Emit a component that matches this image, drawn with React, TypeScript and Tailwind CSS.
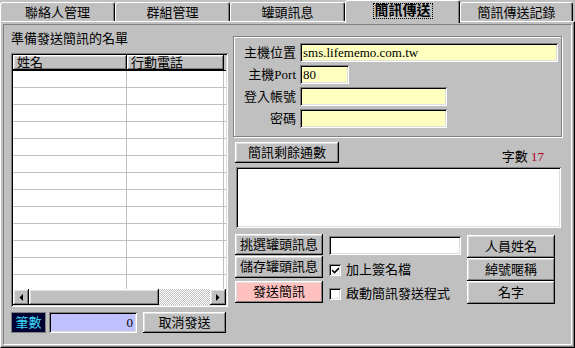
import React from 'react';

const FONT = "font-['Liberation_Serif','Noto_Sans_CJK_TC',serif]";
const RAISED =
  'shadow-[inset_-1px_-1px_0_#000,inset_1px_1px_0_#fff,inset_-2px_-2px_0_#808080,inset_2px_2px_0_#dfdfdf]';
const SUNKEN =
  'shadow-[inset_1px_1px_0_#808080,inset_-1px_-1px_0_#fff,inset_2px_2px_0_#000,inset_-2px_-2px_0_#dfdfdf]';

const tabs = ['聯絡人管理', '群組管理', '罐頭訊息', '簡訊傳送', '簡訊傳送記錄'];

const Btn: React.FC<{ className?: string; children: React.ReactNode }> = ({ className = '', children }) => (
  <button
    className={`flex items-center justify-center text-[13px] leading-[16px] text-black ${RAISED} ${className}`}
  >
    {children}
  </button>
);

const Field: React.FC<{ className?: string; children?: React.ReactNode }> = ({ className = '', children }) => (
  <div className={`flex h-[19px] items-center pl-[3px] text-[13px] leading-[15px] ${SUNKEN} ${className}`}>
    {children}
  </div>
);

const Arrow: React.FC<{ dir: 'left' | 'right' }> = ({ dir }) => (
  <svg width="4" height="7" viewBox="0 0 4 7">
    {dir === 'left' ? <path d="M4 0 L4 7 L0.5 3.5 Z" fill="#000" /> : <path d="M0 0 L0 7 L3.5 3.5 Z" fill="#000" />}
  </svg>
);

const Check: React.FC<{ checked?: boolean; label: string }> = ({ checked, label }) => (
  <div className="flex h-[16px] items-center">
    <div className={`flex h-[12px] w-[12px] items-center justify-center bg-white ${SUNKEN}`}>
      {checked && (
        <svg width="7" height="7" viewBox="0 0 7 7">
          <path d="M0 3 L2.5 5.5 L7 1" stroke="#000" strokeWidth="1.6" fill="none" />
        </svg>
      )}
    </div>
    <span className="ml-[5px] text-[13px] leading-[16px]">{label}</span>
  </div>
);

const rows = Array.from({ length: 13 });

export default function App() {
  return (
    <div className={`flex h-[348px] w-[575px] flex-col overflow-hidden bg-[#c0c0c0] text-black ${FONT}`}>
      {/* tab strip */}
      <div className="flex h-[21px] items-end">
        {tabs.map((t, i) =>
          i === 3 ? (
            <div
              key={t}
              className="relative z-10 -mb-[2px] flex h-[23px] w-[115px] justify-center rounded-t-[3px] border-x border-t border-white border-r-black bg-[#c0c0c0] pt-[2px] shadow-[inset_-1px_0_0_#808080]"
            >
              <span className="h-[16px] border border-dotted border-black px-[1px] text-[14px] font-bold leading-[14px]">
                {t}
              </span>
            </div>
          ) : (
            <div
              key={t}
              className={`flex h-[19px] items-center justify-center rounded-t-[3px] border-x border-t border-white border-r-black text-[13px] leading-[15px] shadow-[inset_-1px_0_0_#808080] ${
                i === 4 ? 'w-[113px]' : 'w-[115px]'
              }`}
            >
              {t}
            </div>
          )
        )}
      </div>

      {/* tab page */}
      <div className="flex-1 border border-white border-r-black border-b-black p-[2px] shadow-[inset_-1px_-1px_0_#808080]">
        <div className="flex h-full border border-[#808080] border-r-white border-b-white pl-[7px]">
          {/* left: recipient list */}
          <div className="flex w-[217px] flex-col pt-[6px]">
            <div className="h-[22px] text-[13px] leading-[16px]">準備發送簡訊的名單</div>
            <div className={`flex h-[254px] flex-col bg-white p-[2px] ${SUNKEN}`}>
              <div className="flex h-[16px] shrink-0 border-b border-black bg-[#c0c0c0] text-[13px] leading-[15px]">
                <div className={`w-[114px] pl-[4px] ${RAISED}`}>姓名</div>
                <div className={`w-[97px] pl-[4px] ${RAISED}`}>行動電話</div>
                <div className="flex-1" />
              </div>
              <div className="flex-1 overflow-hidden">
                {rows.map((_, i) => (
                  <div key={i} className="flex h-[17px] border-b border-[#c0c0c0]">
                    <div className="w-[114px] border-r border-[#c0c0c0]" />
                    <div className="w-[97px] border-r border-[#c0c0c0]" />
                  </div>
                ))}
              </div>
              <div className="flex h-[16px] shrink-0 bg-[#c0c0c0]">
                <div className={`flex w-[16px] items-center justify-center ${RAISED}`}>
                  <Arrow dir="left" />
                </div>
                <div className={`w-[130px] ${RAISED}`} />
                <div className="flex-1 bg-[image:repeating-conic-gradient(#c0c0c0_0%_25%,#fff_0%_50%)] bg-size-[2px_2px]" />
                <div className={`flex w-[16px] items-center justify-center ${RAISED}`}>
                  <Arrow dir="right" />
                </div>
              </div>
            </div>
            <div className="mt-[5px] flex h-[21px]">
              <div className="flex w-[35px] items-center justify-center bg-[#000033] text-[13px] leading-[16px] text-[#3cd8f8] shadow-[inset_1px_1px_0_#808080,inset_-1px_-1px_0_#808080]">
                筆數
              </div>
              <div
                className={`ml-[3px] flex w-[88px] items-center justify-end bg-[#c0c0ff] pr-[4px] text-[13px] leading-[16px] ${SUNKEN}`}
              >
                0
              </div>
              <Btn className="ml-[6px] w-[83px]">取消發送</Btn>
            </div>
          </div>

          {/* right: sending settings */}
          <div className="ml-[4px] flex w-[331px] flex-col">
            <div className="ml-[1px] mt-[11px] flex h-[101px] w-[329px] flex-col gap-[3px] border border-[#808080] pt-[6px] shadow-[inset_1px_1px_0_#fff,1px_1px_0_#fff]">
              {[
                ['主機位置', 'w-[258px] bg-[#ffffc0]', 'sms.lifememo.com.tw'],
                ['主機Port', 'w-[49px] bg-[#ffffc0]', '80'],
                ['登入帳號', 'w-[147px] bg-[#ffffc0]', ''],
                ['密碼', 'w-[147px] bg-[#ffffc0]', ''],
              ].map(([label, cls, value]) => (
                <div key={label} className="flex h-[19px] items-center">
                  <div className="w-[63px] pr-[1px] text-right text-[13px] leading-[16px]">{label}</div>
                  <Field className={`ml-[3px] ${cls}`}>{value}</Field>
                </div>
              ))}
            </div>

            <div className="mt-[5px] flex h-[21px] justify-between">
              <Btn className="ml-[3px] w-[104px]">簡訊剩餘通數</Btn>
              <div className="mr-[19px] pt-[7px] text-[13px] leading-[16px]">
                字數 <span className="text-[#b00020]">17</span>
              </div>
            </div>

            <div className={`ml-[4px] mt-[4px] h-[61px] w-[325px] bg-white ${SUNKEN}`} />

            <div className="flex">
              <div className="ml-[3px] flex w-[88px] flex-col pt-[6px]">
                <Btn className="h-[21px]">挑選罐頭訊息</Btn>
                <Btn className="mt-[1px] h-[22px]">儲存罐頭訊息</Btn>
                <Btn className="mt-[3px] h-[22px] bg-[#ffc0c0] text-[#800000]">發送簡訊</Btn>
              </div>
              <div className="ml-[6px] flex w-[132px] flex-col pt-[8px]">
                <Field className="bg-white" />
                <div className="mt-[7px]">
                  <Check checked label="加上簽名檔" />
                </div>
                <div className="mt-[8px]">
                  <Check label="啟動簡訊發送程式" />
                </div>
              </div>
              <div className="ml-[6px] flex w-[88px] flex-col pt-[7px]">
                <Btn className="h-[23px]">人員姓名</Btn>
                <Btn className="h-[23px]">綽號暱稱</Btn>
                <Btn className="h-[23px]">名字</Btn>
              </div>
            </div>
          </div>
        </div>
      </div>
    </div>
  );
}
